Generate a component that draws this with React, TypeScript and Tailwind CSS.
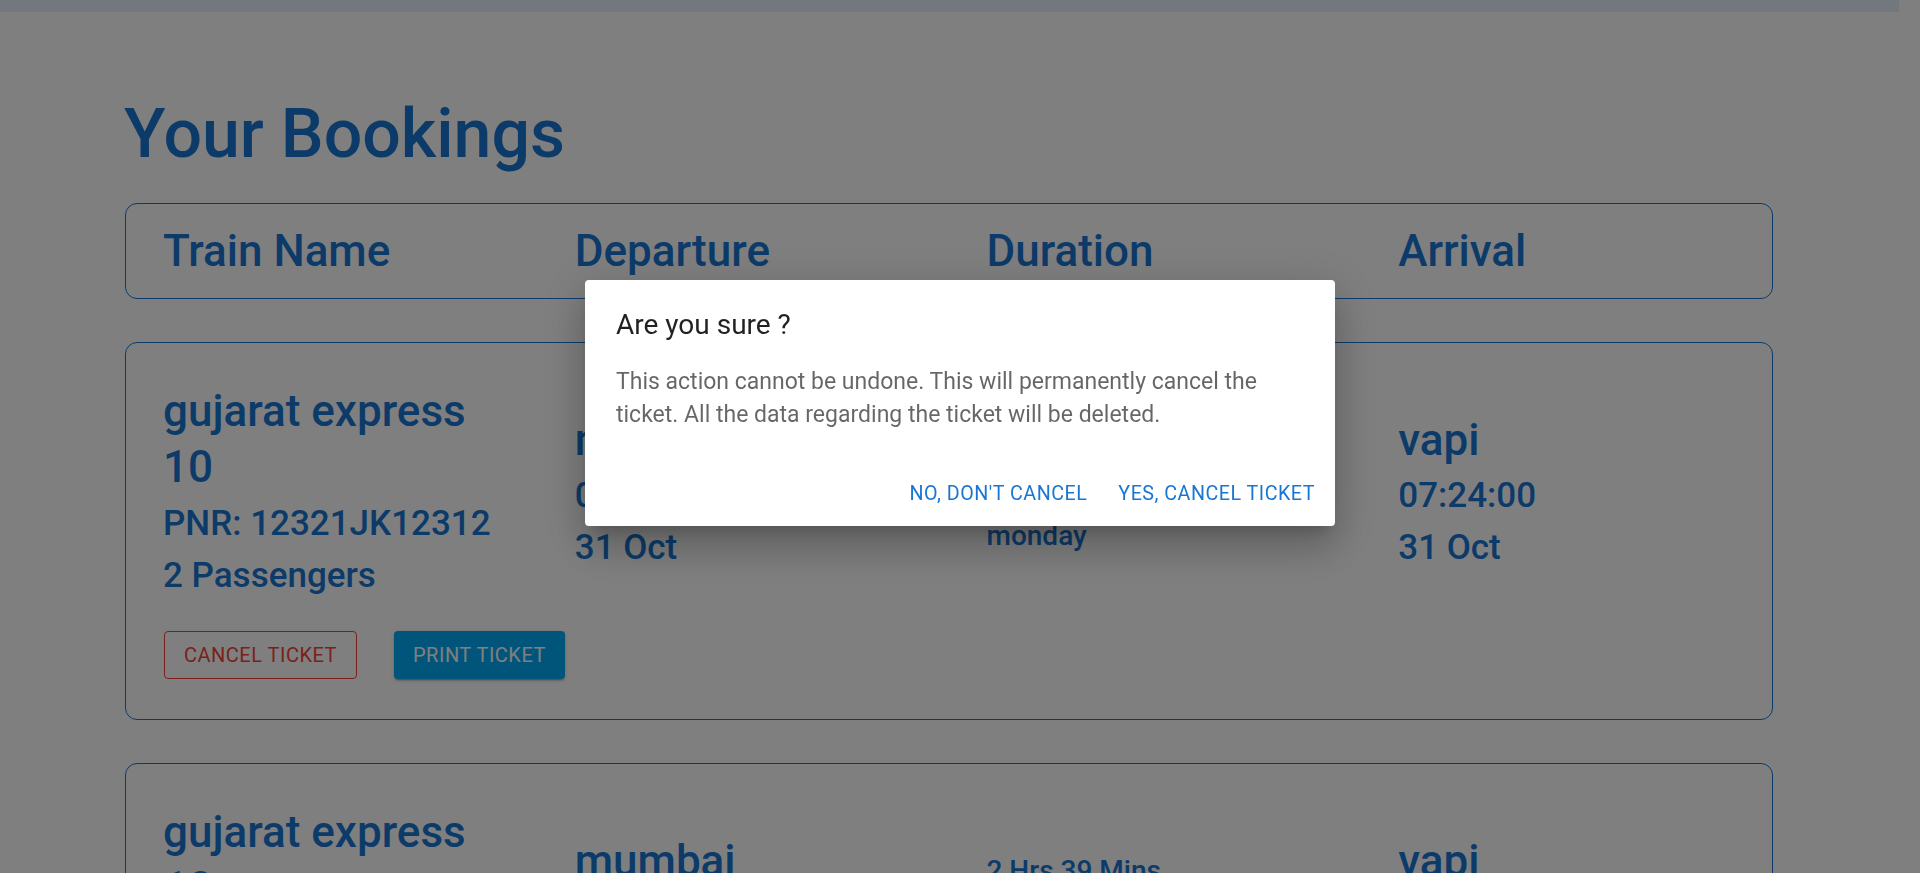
import React from "react";

type Booking = {
    train: string;
    pnr: string;
    passengers: number;
    from: string;
    depTime: string;
    depDate: string;
    duration: string;
    day: string;
    to: string;
    arrTime: string;
    arrDate: string;
};

const bookings: Booking[] = [
    {
        train: "gujarat express 10",
        pnr: "12321JK12312",
        passengers: 2,
        from: "mumbai",
        depTime: "04:45:00",
        depDate: "31 Oct",
        duration: "2 Hrs 39 Mins",
        day: "monday",
        to: "vapi",
        arrTime: "07:24:00",
        arrDate: "31 Oct",
    },
    {
        train: "gujarat express 10",
        pnr: "12321JK12312",
        passengers: 2,
        from: "mumbai",
        depTime: "04:45:00",
        depDate: "31 Oct",
        duration: "2 Hrs 39 Mins",
        day: "monday",
        to: "vapi",
        arrTime: "07:24:00",
        arrDate: "31 Oct",
    },
];

const Place = ({ name, time, date }: { name: string; time: string; date: string }) => (
    <div>
        <div className="text-[44px] leading-[56px] font-medium">{name}</div>
        <div className="mt-[6px] text-[35px] leading-[44px] font-medium">{time}</div>
        <div className="mt-[8px] text-[35px] leading-[44px] font-medium">{date}</div>
    </div>
);

const BookingCard = ({ b }: { b: Booking }) => {
    return (
        <div className="mt-[43px] first:mt-[47px] rounded-[12px] border border-[#1976d2] pt-[40px] pb-[40px] px-[37px]">
            <div className="grid grid-cols-4 gap-x-[75px] items-center">
                <div>
                    <div className="text-[44px] leading-[56px] font-medium">{b.train}</div>
                    <div className="mt-[7px] text-[35px] leading-[44px] font-medium">PNR: {b.pnr}</div>
                    <div className="mt-[8px] text-[35px] leading-[44px] font-medium">{b.passengers} Passengers</div>
                </div>
                <Place name={b.from} time={b.depTime} date={b.depDate} />
                <div className="pt-[3px]">
                    <div className="text-[28px] leading-[35px] font-medium">{b.duration}</div>
                    <div className="h-[51px] flex items-center">
                        <div className="h-[2px] w-[150px] bg-[#1976d2]" />
                    </div>
                    <div className="text-[28px] leading-[35px] font-medium">{b.day}</div>
                </div>
                <Place name={b.to} time={b.arrTime} date={b.arrDate} />
            </div>
            <div className="mt-[33px] flex gap-[37px] ml-[1px]">
                <button className="h-[48px] px-[19px] rounded-[4px] border border-[#f44336] text-[#f44336] text-[20px] uppercase tracking-[0.5px]">
                    Cancel Ticket
                </button>
                <button className="h-[48px] px-[19px] rounded-[4px] bg-[#03a9f4] text-white text-[20px] uppercase tracking-[0.5px] shadow-[0px_3px_1px_-2px_rgba(0,0,0,0.2),0px_2px_2px_0px_rgba(0,0,0,0.14),0px_1px_5px_0px_rgba(0,0,0,0.12)]">
                    Print Ticket
                </button>
            </div>
        </div>
    );
};

export default function App() {
    return (
        <div className="relative h-[873px] overflow-hidden bg-white font-['Roboto','Liberation_Sans',sans-serif]">
            <div className="pr-[21px]">
                <div className="h-[12px] bg-[#e6f0ff]" />
                <main className="pl-[125px] w-[1773px] text-[#1976d2]">
                    <h1 className="-ml-[1px] mt-[79px] text-[68px] leading-[86px] font-medium">Your Bookings</h1>
                    <div className="mt-[26px] h-[96px] rounded-[12px] border border-[#1976d2] px-[37px] grid grid-cols-4 gap-x-[75px] items-center">
                        <div className="text-[44px] font-medium">Train Name</div>
                        <div className="text-[44px] font-medium">Departure</div>
                        <div className="text-[44px] font-medium">Duration</div>
                        <div className="text-[44px] font-medium">Arrival</div>
                    </div>
                    {bookings.map((b, i) => (
                        <BookingCard key={i} b={b} />
                    ))}
                </main>
            </div>

            {/* backdrop + confirm dialog */}
            <div className="fixed inset-0 bg-black/50" />
            <div className="fixed inset-0 flex justify-center pt-[280px]">
                <div
                    role="dialog"
                    className="w-[750px] h-[246px] flex flex-col rounded-[4px] bg-white shadow-[0px_11px_15px_-7px_rgba(0,0,0,0.2),0px_24px_38px_3px_rgba(0,0,0,0.14),0px_9px_46px_8px_rgba(0,0,0,0.12)]"
                >
                    <h2 className="px-[31px] pt-[26px] text-[28px] leading-[37px] font-normal text-black/[0.87]">
                        Are you sure ?
                    </h2>
                    <p className="mt-[22px] px-[31px] text-[23px] leading-[33px] text-black/60">
                        This action cannot be undone. This will permanently cancel the ticket. All the data regarding the ticket will be deleted.
                    </p>
                    <div className="mt-auto flex justify-end gap-[11px] px-[10px] pb-[9px]">
                        <button className="h-[46px] px-[10px] rounded-[4px] text-[19.7px] font-normal uppercase tracking-[0.5px] text-[#1976d2]">
                            No, don't cancel
                        </button>
                        <button className="h-[46px] px-[10px] rounded-[4px] text-[19.7px] font-normal uppercase tracking-[0.5px] text-[#1976d2]">
                            Yes, cancel ticket
                        </button>
                    </div>
                </div>
            </div>
        </div>
    );
}
